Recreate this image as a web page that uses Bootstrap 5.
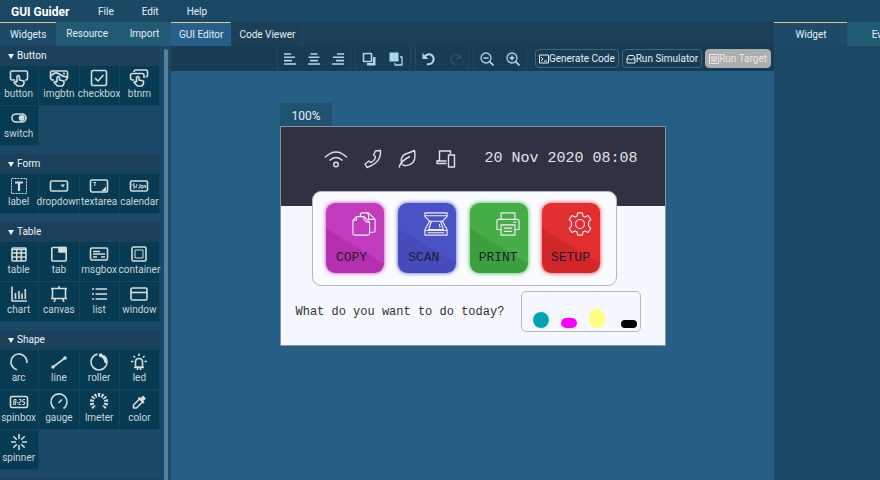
<!DOCTYPE html>
<html lang="en">
<head>
<meta charset="utf-8">
<meta name="viewport" content="width=device-width, initial-scale=1">
<title>GUI Guider</title>
<link href="https://cdn.jsdelivr.net/npm/bootstrap@5.3.0/dist/css/bootstrap.min.css" rel="stylesheet">
<style>
body{font:10px/14px Roboto,"Open Sans",sans-serif;background:#1b4965;color:#e6eef3}
svg{display:block;flex:none;fill:none;stroke:currentColor;stroke-width:1.6;stroke-linejoin:round}
button{font:inherit;color:inherit;background:none;border:0;padding:0}
a,a:hover{color:inherit;text-decoration:none}
.topmenu{height:22px;padding:1px 0 0 11px}
.brandname{font-size:12px;font-weight:700;width:87px;color:#fff}
.topmenu .entries{gap:28px}
.sidebar-l{width:171px;background:#1c4968}
.sidebar-r{width:106px;background:#1c4866}
.tabstrip{height:24px;flex:none}
.tabstrip button{border-top:1px solid transparent;background:#205a73;white-space:nowrap}
.tabstrip button.current{border-color:#dccb83;background:#1d4a69}
.tabstrip.side button{padding:0 10px}
.tabstrip.side .raised{padding-bottom:2px}
.centre-tabs{background:#1a4059}
.centre-tabs button{background:#1a3f57;padding:1px 7px 0 8px;border-right:1px solid #214a62}
.centre-tabs button.current{background:#26608a;border-right-color:#26608a}
.tabstrip.props button{padding:0 20px 0 21px;min-width:73px}
.palette{width:160px}
.scroller{width:4px;margin:3px 3px 0 4px;background:#587f98;border-radius:2px 2px 0 0}
.group-head{height:20px;padding-left:8px;background:#1a405b;color:#f2f5f7}
.group-head::before{content:"";border:3px solid transparent;border-top:5px solid #f2f5f7;border-bottom:0;margin-right:3px}
.group-head.closed::before{display:none}
.tiles{display:grid;grid-template-columns:repeat(4,minmax(0,1fr));margin:0 0 8px -1px}
.tile{height:40px;padding-top:2px;background:#063b53;border-right:1px solid #12465f;border-bottom:1px solid #12465f;white-space:nowrap;color:#cbd6da}
.tile svg{width:20px;height:20px;color:#d5dcda}
.tile span{margin-top:-1px}
.toolbar{height:25px;background:#173c53;padding-right:3px}
.tools{border:solid #23485d;border-width:0 1px;margin-right:4px;height:100%;color:#a9d7ec}
.tools button{width:26px}
.tools.three button{width:24px}
.tools.two button{width:27px}
.runs{gap:3px;margin-left:4px}
.run{height:19px;border:1px solid #42677b;border-radius:4px;padding:0 3px;white-space:nowrap}
.run.off{background:#adadad;border-color:#adadad;color:#e8e8e8}
.workspace{background:#265f85;padding-top:32px}
.zoomtag{height:23px;padding:2px 11px 0 12px;background:#1f526f;font-size:12px}
.device{min-width:386px;border:1px solid #87929f;background:#f5f8fe;font-family:"Liberation Mono",monospace;color:#333;padding-bottom:13px}
.band{height:79px;background:#303143;color:#e1e2e8;padding:0 27px 15px 43px}
.band svg{stroke-width:1.4}
.status{gap:16px}
.clock{font-size:15px}
.launcher{margin:-15px 48px 0 31px;padding:11px 15px 12px 13px;border:1px solid #b4b8c2;border-radius:9px;background:#f9fbff}
.app{width:58px;height:70px;border-radius:9px;padding:9px 8px 8px 6px;font-size:13px;color:#1f1a2e;background:linear-gradient(211deg,var(--hi) 57%,var(--lo) 58%);box-shadow:0 0 4px var(--hi)}
.app svg{width:24px;height:24px;color:#f4eefa;stroke-width:1.2}
.copy{--hi:#c23dbd;--lo:#b430ae}
.scan{--hi:#4a53c6;--lo:#454bb9}
.print{--hi:#45ae46;--lo:#3c9f3e}
.setup{--hi:#e32f30;--lo:#d22729}
.footer-row{padding:5px 24px 0 15px;font-size:12px}
.inks{width:120px;height:41px;border:1px solid #b4b8c2;border-radius:5px;padding:0 3px 3px 11px}
.ink{width:16px;border-radius:8px}
.cyan{height:16px;background:#02a4b2}
.magenta{height:10px;background:#f0f}
.yellow{height:19px;background:#ffff80}
.black{height:8px;background:#000;margin-left:4px}
</style>
<script src="https://cdn.jsdelivr.net/npm/bootstrap@5.3.0/dist/js/bootstrap.bundle.min.js"></script>
</head>
<body class="vh-100 d-flex flex-column overflow-hidden">
<header class="topmenu d-flex align-items-center flex-shrink-0">
  <span class="brandname">GUI Guider</span>
  <nav class="entries d-flex"><a href="#">File</a><a href="#">Edit</a><a href="#">Help</a></nav>
</header>
<div class="d-flex flex-grow-1 overflow-hidden">
  <aside class="sidebar-l d-flex flex-column flex-shrink-0 overflow-hidden">
    <div class="tabstrip side d-flex">
      <button class="current">Widgets</button><button class="raised">Resource</button><button class="raised flex-grow-1">Import</button>
    </div>
    <div class="d-flex flex-grow-1">
      <div class="palette flex-grow-1">
        <div class="group-head d-flex align-items-center">Button</div>
        <div class="tiles">
          <button class="tile d-flex flex-column align-items-center"><svg viewBox="0 0 20 20"><path d="M6 12H3Q1.500 12 1.500 10.500V4.500Q1.500 3 3 3H17Q18.500 3 18.500 4.500V10.500Q18.500 12 17 12H16M8 14V8.500Q9.500 6.500 10.500 8.500V12L15 13V15.500L13.500 18H8.500L5 14.500Q6 12.500 8 14.500"/></svg><span>button</span></button>
          <button class="tile d-flex flex-column align-items-center"><svg viewBox="0 0 20 20"><path d="M5 12H2.500L1.500 10V5Q1.500 3 3 3H17Q18.500 3 18.500 5V10L17 12H16M2 8Q6 3 10 6T18 9M14 5.500H16M8 14V9.500Q9.500 7.500 10.500 9.500V12L15 13V15.500L13.500 18H8.500L5 14.500Q6 12.500 8 14.500"/></svg><span>imgbtn</span></button>
          <button class="tile d-flex flex-column align-items-center"><svg viewBox="0 0 20 20"><rect x="2.500" y="2.500" width="15" height="15" rx="1.500"/><path d="M6 10l3 3 5.500-6"/></svg><span>checkbox</span></button>
          <button class="tile d-flex flex-column align-items-center"><svg viewBox="0 0 20 20"><path d="M5 4Q5 2 7 2H17Q18.500 2 18.500 4V7Q18.500 9 16.500 9M5 12H3.500Q1.500 12 1.500 10V7.500Q1.500 5.500 3.500 5.500H13Q15 5.500 15 7.500V10M7.500 14V9.500Q9 7.500 10 9.500V12L14.500 13V15.500L13 18H8.500L5 14.500Q6 12.500 7.500 14.500"/></svg><span>btnm</span></button>
          <button class="tile d-flex flex-column align-items-center"><svg viewBox="0 0 20 20"><rect x="3" y="6" width="14" height="8" rx="4"/><circle cx="12.700" cy="10" r="2.200" fill="currentColor"/></svg><span>switch</span></button>
        </div>
        <div class="group-head d-flex align-items-center">Form</div>
        <div class="tiles">
          <button class="tile d-flex flex-column align-items-center"><svg viewBox="0 0 20 20"><rect x="2.500" y="2.500" width="15" height="15" stroke-width="1" stroke-dasharray="2 1"/><path d="M6 6.500H14M10 6.500V15" stroke-width="2.200"/></svg><span>label</span></button>
          <button class="tile d-flex flex-column align-items-center"><svg viewBox="0 0 20 20"><rect x="1.500" y="5" width="17" height="10" rx="1.500"/><path d="M11.500 8.500h4.500l-2.250 3z" fill="currentColor" stroke="none"/></svg><span>dropdown</span></button>
          <button class="tile d-flex flex-column align-items-center"><svg viewBox="0 0 20 20"><rect x="1.500" y="4" width="17" height="12" rx="1.500"/><path d="M4.500 6.500H7M5.800 6.500V10" stroke-width="1"/><path d="M17 10.500V15H12.500z" fill="currentColor" stroke="none"/></svg><span>textarea</span></button>
          <button class="tile d-flex flex-column align-items-center"><svg viewBox="0 0 20 20"><rect x="1.500" y="5" width="17" height="10" rx="1.500"/><path d="M6 8H4v2h2v2H4M7 12l1-4M11 8v4H9M12 12V9.500h2V12zM15 12V9.500h1.500V12" stroke-width=".9"/></svg><span>calendar</span></button>
        </div>
        <div class="group-head d-flex align-items-center">Table</div>
        <div class="tiles">
          <button class="tile d-flex flex-column align-items-center"><svg viewBox="0 0 20 20"><rect x="3" y="4" width="14" height="13" rx="1"/><path d="M3 5.500H17M3 9H17M3 13H17M7.700 5V17M12.300 5V17"/></svg><span>table</span></button>
          <button class="tile d-flex flex-column align-items-center"><svg viewBox="0 0 20 20"><rect x="2.800" y="3.500" width="14.400" height="13.500" rx="1"/><path d="M10 3.500h7V8h-7z" fill="currentColor"/></svg><span>tab</span></button>
          <button class="tile d-flex flex-column align-items-center"><svg viewBox="0 0 20 20"><rect x="1.500" y="4" width="17" height="12" rx="1.500"/><path d="M4 7.500h7M4 10h12M4 13h4M12 13h4" stroke-width="1.400"/></svg><span>msgbox</span></button>
          <button class="tile d-flex flex-column align-items-center"><svg viewBox="0 0 20 20"><rect x="3" y="3" width="14" height="14" rx="1.500"/><rect x="6" y="6" width="8" height="8" stroke-width="1"/></svg><span>container</span></button>
          <button class="tile d-flex flex-column align-items-center"><svg viewBox="0 0 20 20"><path d="M3 2.500V17H18M6.500 15V9M10 15V7M13 15V9.500M16.300 15V5"/></svg><span>chart</span></button>
          <button class="tile d-flex flex-column align-items-center"><svg viewBox="0 0 20 20"><path d="M3.500 4.500h13v10h-13zM10 2v2.500M6.500 14.500L5 18M13.500 14.500L15 18M2 14.500H18M2 4.500H18"/></svg><span>canvas</span></button>
          <button class="tile d-flex flex-column align-items-center"><svg viewBox="0 0 20 20"><path d="M6.500 5H18M6.500 10H18M6.500 15H18M3 5h2M3 10h2M3 15h2"/></svg><span>list</span></button>
          <button class="tile d-flex flex-column align-items-center"><svg viewBox="0 0 20 20"><rect x="2" y="4" width="16" height="12" rx="1.500"/><path d="M2 8.500H18"/></svg><span>window</span></button>
        </div>
        <div class="group-head d-flex align-items-center">Shape</div>
        <div class="tiles">
          <button class="tile d-flex flex-column align-items-center"><svg viewBox="0 0 20 20"><path d="M8 17.800A8 8 0 1 1 17.900 11"/></svg><span>arc</span></button>
          <button class="tile d-flex flex-column align-items-center"><svg viewBox="0 0 20 20"><path d="M4 15L16 6"/><circle cx="4" cy="15" r="1"/><circle cx="16" cy="6" r="1"/></svg><span>line</span></button>
          <button class="tile d-flex flex-column align-items-center"><svg viewBox="0 0 20 20"><circle cx="10" cy="10" r="8" stroke-dasharray="36 3 1.500 2"/><path d="M10 3Q16.500 4 17 11" stroke-width="3"/></svg><span>roller</span></button>
          <button class="tile d-flex flex-column align-items-center"><svg viewBox="0 0 20 20"><path d="M6.500 15V10Q6.500 6.500 10 6.500T13.500 10V15zM5 15.500H15M8.500 16v2M11.500 16v2M10 1.500v2.500M4.500 4l1.500 1.500M15.500 4L14 5.500M2 9.500h2.500M15.500 9.500H18"/></svg><span>led</span></button>
          <button class="tile d-flex flex-column align-items-center"><svg viewBox="0 0 20 20"><rect x="1.500" y="4.500" width="17" height="11" rx="1.500"/><path d="M4.500 12.500l.6-5h2l-.6 5zM4.800 10h2M8 10.500h1M10 7.500h2l-.3 2.500h-1.500l-.4 2.500h2M16 7.500h-2l-.3 2.500h2l-.4 2.500h-2" stroke-width="1"/></svg><span>spinbox</span></button>
          <button class="tile d-flex flex-column align-items-center"><svg viewBox="0 0 20 20"><path d="M5.500 16.500A8 8 0 1 1 14.500 16.500M9.500 11L13 7.500"/></svg><span>gauge</span></button>
          <button class="tile d-flex flex-column align-items-center"><svg viewBox="0 0 20 20"><path d="M5.200 15.500A7.200 7.200 0 1 1 14.800 15.500" stroke-width="4" stroke-dasharray="1.900 1.300"/></svg><span>lmeter</span></button>
          <button class="tile d-flex flex-column align-items-center"><svg viewBox="0 0 20 20"><path d="M10.500 7L4.500 13V16H7.500L13.500 10"/><path d="M9.500 5.500l5.500 5.500" stroke-width="2"/><path d="M12 8.500L15.500 5" stroke-width="4"/></svg><span>color</span></button>
          <button class="tile d-flex flex-column align-items-center"><svg viewBox="0 0 20 20"><path d="M10 2v5M10 13v5M2 10h5M13 10h5M4.300 4.300l3.500 3.500M12.200 12.200l3.500 3.500M4.300 15.700l3.500-3.500M12.200 7.800l3.500-3.500"/></svg><span>spinner</span></button>
        </div>
        <div class="group-head closed"></div>
      </div>
      <div class="scroller"></div>
    </div>
  </aside>
  <main class="d-flex flex-column flex-grow-1">
    <div class="tabstrip centre-tabs d-flex"><button class="current">GUI Editor</button><button>Code Viewer</button></div>
    <div class="toolbar d-flex align-items-center justify-content-end flex-shrink-0">
      <div class="tools three d-flex">
        <button class="d-flex align-items-center justify-content-center" aria-label="Align left"><svg width="14" height="14" viewBox="0 0 14 14"><path d="M1 2h7M1 5.300h11M1 8.600h8M1 12h12"/></svg></button>
        <button class="d-flex align-items-center justify-content-center" aria-label="Align center"><svg width="14" height="14" viewBox="0 0 14 14"><path d="M3.500 2h7M1.500 5.300h11M3 8.600h8M1 12h12"/></svg></button>
        <button class="d-flex align-items-center justify-content-center" aria-label="Align right"><svg width="14" height="14" viewBox="0 0 14 14"><path d="M6 2h7M2 5.300h11M5 8.600h8M1 12h12"/></svg></button>
      </div>
      <div class="tools two d-flex">
        <button class="d-flex align-items-center justify-content-center" aria-label="Send backward"><svg width="14" height="14" viewBox="0 0 14 14"><path d="M1.500 1.500h8v8h-8z"/><path d="M11 5h2.500v8.500H5V11h6z" fill="currentColor" stroke="none"/></svg></button>
        <button class="d-flex align-items-center justify-content-center" aria-label="Bring forward"><svg width="14" height="14" viewBox="0 0 14 14"><path d="M.5.500h9v9h-9z" fill="currentColor" stroke="none"/><path d="M11 5h2v8H6v-2" stroke-width="1.300"/></svg></button>
      </div>
      <div class="tools d-flex">
        <button class="d-flex align-items-center justify-content-center" aria-label="Undo"><svg width="14" height="14" viewBox="0 0 14 14"><path d="M2 5.500Q4 2 8 2.200A5 5 0 1 1 5 12" stroke-width="2"/><path d="M.5 1v6h6z" fill="currentColor" stroke="none"/></svg></button>
        <button class="d-flex align-items-center justify-content-center opacity-25" disabled aria-label="Redo"><svg width="14" height="14" viewBox="0 0 14 14" opacity=".5"><path d="M12 5.500Q10 2 6.500 2.200A5 5 0 1 0 9 12" stroke-width="1.600"/><path d="M13.500 1v6h-6z" fill="currentColor" stroke="none"/></svg></button>
      </div>
      <div class="tools d-flex">
        <button class="d-flex align-items-center justify-content-center" aria-label="Zoom out"><svg width="14" height="14" viewBox="0 0 14 14"><circle cx="6" cy="6" r="5" stroke-width="1.300"/><path d="M3.500 6h5M9.600 9.600L13.500 13.500"/></svg></button>
        <button class="d-flex align-items-center justify-content-center" aria-label="Zoom in"><svg width="14" height="14" viewBox="0 0 14 14"><circle cx="6" cy="6" r="5" stroke-width="1.300"/><path d="M3.500 6h5M6 3.500v5M9.600 9.600L13.500 13.500"/></svg></button>
      </div>
      <div class="runs d-flex">
        <button class="run d-flex align-items-center"><svg width="10" height="10" viewBox="0 0 10 10"><path d="M.5 1h9v8h-9zM2 3l2 2-2 2M5 7h3" stroke-width="1"/></svg>Generate Code</button>
        <button class="run d-flex align-items-center"><svg width="10" height="10" viewBox="0 0 10 10"><path d="M1 4.500L2.500 1.500h5L9 4.500V9H1zM1 5h2.500Q5 7 6.500 5H9" stroke-width="1"/></svg>Run Simulator</button>
        <button class="run off d-flex align-items-center"><svg width="10" height="10" viewBox="0 0 10 10"><path d="M.5.500h9v9h-9zM3 2v6M5 2v6M7 2v6M2 4h2M6 4h2M4 6.500h2" stroke-width="1"/></svg>Run Target</button>
      </div>
    </div>
    <div class="workspace d-flex justify-content-center align-items-start flex-grow-1">
      <div class="d-flex flex-column align-items-start">
        <div class="zoomtag d-flex align-items-center">100%</div>
        <div class="device">
          <div class="band d-flex align-items-center justify-content-between">
            <div class="status d-flex align-items-center">
              <svg width="24" height="20" viewBox="0 0 24 20"><path d="M1 8.500Q12-2.500 23 8.500M5.500 11.500Q12 5.500 18.500 11.500"/><circle cx="12" cy="15.500" r="2.300"/></svg>
              <svg width="18" height="20" viewBox="0 0 18 20"><path d="M11.500 2l5-.5q1 12-13.500 17L1 15l4-3 2 1.500q4-2 4.500-6L9.500 6z"/></svg>
              <svg width="18" height="20" viewBox="0 0 18 20"><path d="M1 18.500Q3 11.500 12 7.500M4 15.500Q1.500 8 7.500 5 11 4 16.500 1.500q1.500 8-1.500 12-4.500 4.500-10.500 2.500"/></svg>
              <svg class="ms-1" width="20" height="20" viewBox="0 0 20 20"><path d="M3.500 11.500V2H14.500V5M3.500 11.500L1 12v2.500H10.500M1 12h9.500M12.500 6h6v12h-6z"/></svg>
            </div>
            <span class="clock">20 Nov 2020 08:08</span>
          </div>
          <div class="launcher d-flex justify-content-between position-relative">
            <button class="app copy d-flex flex-column justify-content-between"><svg class="align-self-end" viewBox="0 0 26 26"><path d="M5 5H13L19 11V23q0 2-2 2H3q-2 0-2-2V9zM5 5V9H1M13 5q-1 6 6 6M9 5V3q0-2 2-2h7l7 7V20q0 2-2 2H19M15 1q4 0 3 7h7"/></svg><span class="align-self-center me-1">COPY</span></button>
            <button class="app scan d-flex flex-column justify-content-between"><svg class="align-self-end" viewBox="0 0 26 26"><path d="M1 1H25V5L20 10H6L1 5zM1 4H25M6 10L1 19V25H25V19L20 10M8 10L5 19H21L18 10M1 20H25M4 22.500H22M16.500 13l1 4"/></svg><span class="align-self-center me-1">SCAN</span></button>
            <button class="app print d-flex flex-column justify-content-between"><svg class="align-self-end" viewBox="0 0 26 26"><path d="M5.500 8V1H20.500V8M5.500 19H1V10q0-2 2-2H23q2 0 2 2V19H20.500M5.500 14H20.500V25H5.500zM8.500 17.500H17.500M8.500 21H17.500M19 11H22"/></svg><span class="align-self-center">PRINT</span></button>
            <button class="app setup d-flex flex-column justify-content-between"><svg class="align-self-end" viewBox="0 0 26 26"><circle cx="13" cy="13" r="4.800"/><path d="M10.500 1h5l.8 3.500 2.200 1 3.200-1.700 3 4.300-2.400 2.600v4.600l2.400 2.600-3 4.300-3.200-1.700-2.200 1-.8 3.500h-5l-.8-3.500-2.200-1-3.200 1.700-3-4.300 2.400-2.600v-4.600L1.300 8.100l3-4.300 3.200 1.700 2.200-1z"/></svg><span class="align-self-center">SETUP</span></button>
          </div>
          <div class="footer-row d-flex align-items-center justify-content-between">
            <span>What do you want to do today?</span>
            <div class="inks d-flex align-items-end justify-content-between"><div class="ink cyan"></div><div class="ink magenta"></div><div class="ink yellow"></div><div class="ink black"></div></div>
          </div>
        </div>
      </div>
    </div>
  </main>
  <aside class="sidebar-r flex-shrink-0 overflow-hidden">
    <div class="tabstrip props d-flex"><button class="current">Widget</button><button>Event</button></div>
  </aside>
</div>
</body>
</html>
